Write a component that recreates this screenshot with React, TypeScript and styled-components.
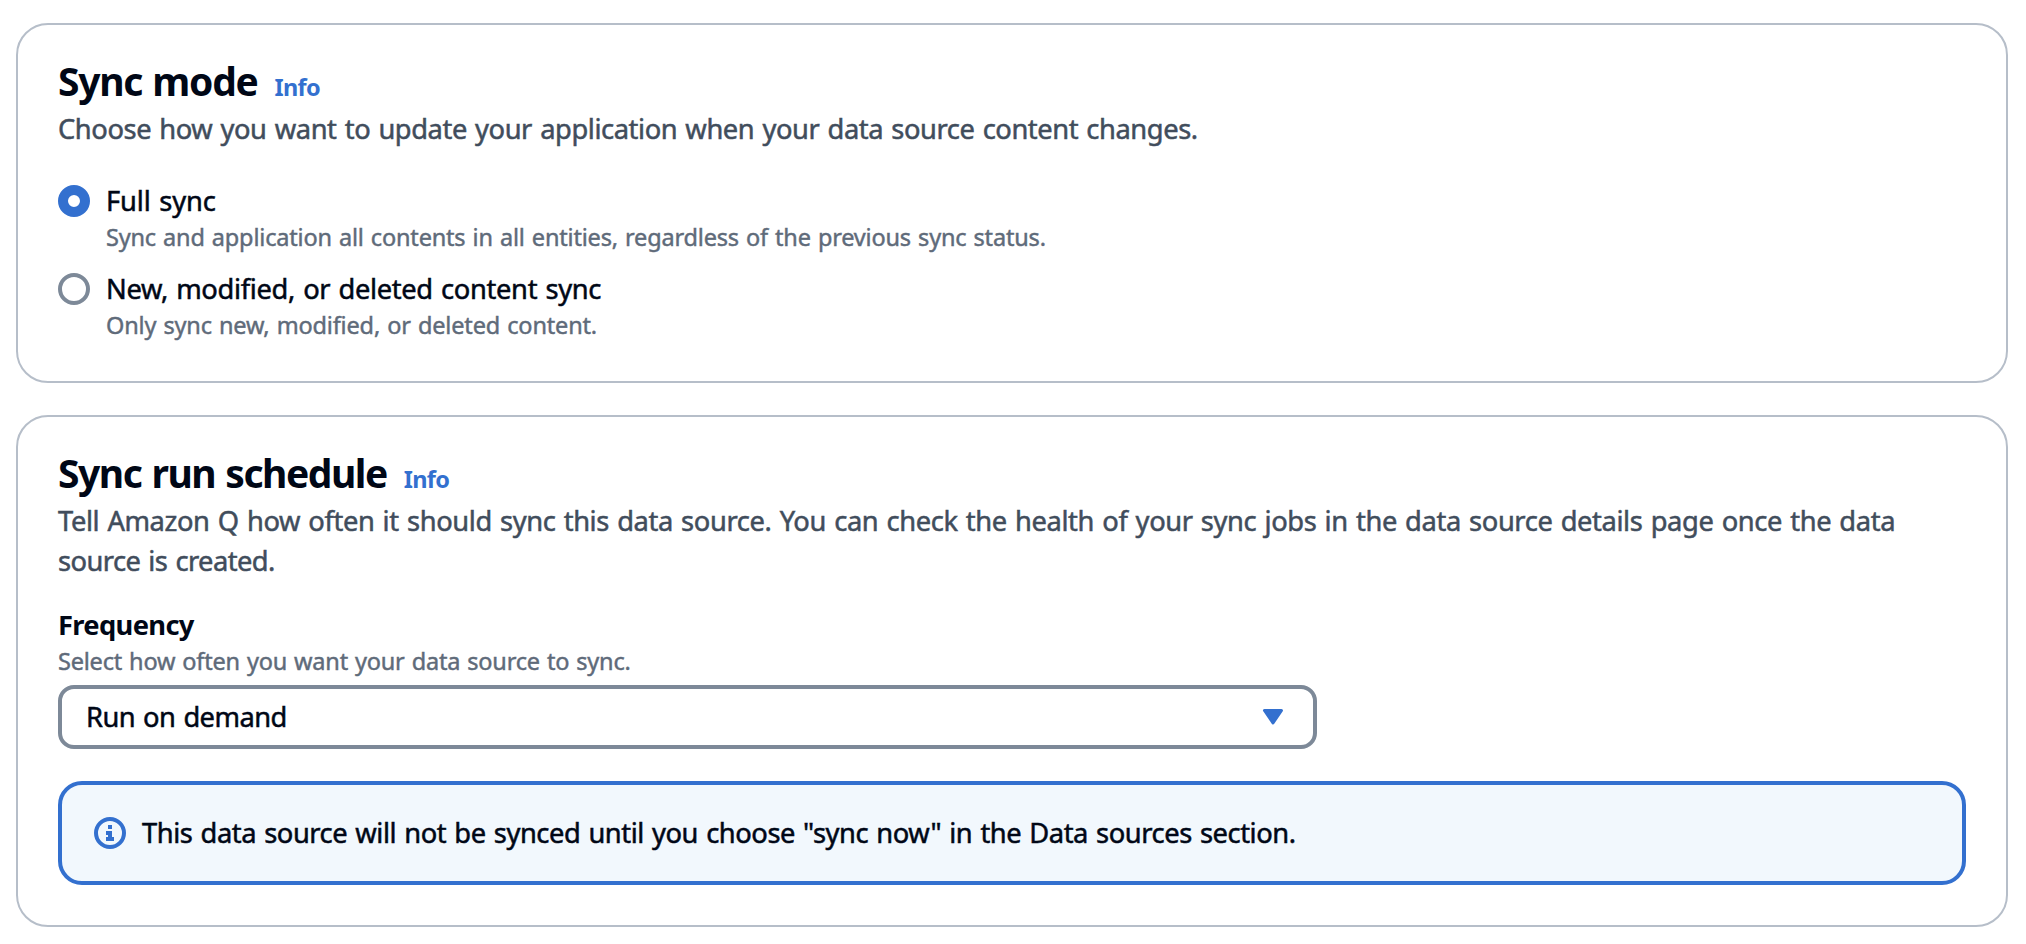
import React, { useState } from 'react';
import styled, { createGlobalStyle } from 'styled-components';

const blue = '#3370cf';
const ink = '#000716';
const slate = '#414d5c';
const muted = '#5f6b7a';
const outline = '#7d8998';

const GlobalStyle = createGlobalStyle`
  *, *::before, *::after { box-sizing: border-box; }
  body {
    margin: 0;
    background: #fff;
    color: ${ink};
    font-family: "Noto Sans", "Open Sans", sans-serif;
    font-size: 27.3px;
    line-height: 40px;
    word-spacing: 1.5px;
  }
`;

const Page = styled.main`
  display: flex;
  flex-direction: column;
  gap: 32px;
  height: 944px;
  padding: 23px 18px 17px 16px;
`;

const Card = styled.section<{ $height: number }>`
  display: flex;
  flex-direction: column;
  height: ${p => p.$height}px;
  padding: 31px 40px 0;
  border: 2px solid #b6bec9;
  border-radius: 32px;
`;

const TitleRow = styled.header`
  display: flex;
  align-items: baseline;
  height: 48px;
`;

const Title = styled.h2<{ $tracking: number }>`
  margin: 0 17px 0 0;
  font-size: 39px;
  font-weight: 700;
  line-height: 50px;
  letter-spacing: ${p => p.$tracking}px;
  white-space: nowrap;
`;

const InfoLink = styled.a`
  color: ${blue};
  font-size: 23.5px;
  font-weight: 700;
  line-height: 32px;
  letter-spacing: -0.7px;
  text-decoration: none;
`;

const Copy = styled.p<{ $tracking: number }>`
  margin: 5px 0 0;
  color: ${slate};
  letter-spacing: ${p => p.$tracking}px;
  -webkit-text-stroke: 0.5px currentColor;
  white-space: nowrap;
`;

const CopyTail = styled.span`
  display: block;
  letter-spacing: -0.56px;
`;

const Options = styled.div`
  display: flex;
  flex-direction: column;
  gap: 16px;
  margin-top: 32px;
`;

const Option = styled.label`
  display: flex;
  gap: 16px;
`;

const Radio = styled.input<{ checked: boolean }>`
  appearance: none;
  flex: none;
  width: 32px;
  height: 32px;
  margin: 4px 0 0;
  border: ${p => (p.checked ? `10px solid ${blue}` : `4px solid ${outline}`)};
  border-radius: 50%;
  background: #fff;
`;

const OptionText = styled.span`
  display: flex;
  flex-direction: column;
`;

const Label = styled.span<{ $tracking: number }>`
  letter-spacing: ${p => p.$tracking}px;
  -webkit-text-stroke: 0.5px currentColor;
  white-space: nowrap;
`;

const Hint = styled.span<{ $tracking: number }>`
  color: ${muted};
  font-size: 23.5px;
  line-height: 33px;
  height: 32px;
  letter-spacing: ${p => p.$tracking}px;
  word-spacing: 1.2px;
  -webkit-text-stroke: 0.45px currentColor;
  white-space: nowrap;
`;

const Field = styled.div`
  display: flex;
  flex-direction: column;
  margin-top: 24px;
`;

const FieldLabel = styled.span`
  font-weight: 700;
  letter-spacing: -0.65px;
`;

const SelectBox = styled.button`
  display: flex;
  align-items: center;
  justify-content: space-between;
  width: 1259px;
  height: 64px;
  margin-top: 8px;
  padding: 0 29px 0 24px;
  border: 4px solid ${outline};
  border-radius: 16px;
  background: #fff;
  color: inherit;
  font: inherit;
  word-spacing: inherit;
`;

const Alert = styled.div`
  display: flex;
  align-items: center;
  gap: 16px;
  height: 104px;
  margin-top: 32px;
  padding: 0 32px;
  border: 4px solid ${blue};
  border-radius: 24px;
  background: #f2f8fd;
`;

const Caret = () => (
  <svg width="22" height="18" viewBox="0 0 22 18">
    <path d="M2.5 2.5H19.5L11 15Z" fill={blue} stroke={blue} strokeWidth="3" strokeLinejoin="round" />
  </svg>
);

const InfoIcon = () => (
  <svg width="32" height="32" viewBox="0 0 32 32">
    <circle cx="16" cy="16" r="14" fill="none" stroke={blue} strokeWidth="4" />
    <path d="M14 8h4v4h-4zM12 14h6v6h2v4h-8v-4h2v-2h-2z" fill={blue} />
  </svg>
);

const modes = [
  {
    label: 'Full sync',
    hint: 'Sync and application all contents in all entities, regardless of the previous sync status.',
    labelTracking: -0.1,
    hintTracking: -0.18,
  },
  {
    label: 'New, modified, or deleted content sync',
    hint: 'Only sync new, modified, or deleted content.',
    labelTracking: -0.34,
    hintTracking: -0.16,
  },
];

export default function App() {
  const [mode, setMode] = useState(0);
  return (
    <>
      <GlobalStyle />
      <Page>
        <Card $height={360}>
          <TitleRow>
            <Title $tracking={-1.3}>Sync mode</Title>
            <InfoLink>Info</InfoLink>
          </TitleRow>
          <Copy $tracking={-0.42}>
            Choose how you want to update your application when your data source content changes.
          </Copy>
          <Options>
            {modes.map((m, i) => (
              <Option key={m.label}>
                <Radio type="radio" name="mode" checked={mode === i} onChange={() => setMode(i)} />
                <OptionText>
                  <Label $tracking={m.labelTracking}>{m.label}</Label>
                  <Hint $tracking={m.hintTracking}>{m.hint}</Hint>
                </OptionText>
              </Option>
            ))}
          </Options>
        </Card>
        <Card $height={512}>
          <TitleRow>
            <Title $tracking={-1.48}>Sync run schedule</Title>
            <InfoLink>Info</InfoLink>
          </TitleRow>
          <Copy $tracking={-0.385}>
            Tell Amazon Q how often it should sync this data source. You can check the health of your sync jobs in the
            data source details page once the data{' '}
            <CopyTail>source is created.</CopyTail>
          </Copy>
          <Field>
            <FieldLabel>Frequency</FieldLabel>
            <Hint $tracking={-0.21}>Select how often you want your data source to sync.</Hint>
            <SelectBox type="button">
              <Label $tracking={-0.56}>Run on demand</Label>
              <Caret />
            </SelectBox>
          </Field>
          <Alert>
            <InfoIcon />
            <Label $tracking={-0.445}>
              This data source will not be synced until you choose "sync now" in the Data sources section.
            </Label>
          </Alert>
        </Card>
      </Page>
    </>
  );
}
